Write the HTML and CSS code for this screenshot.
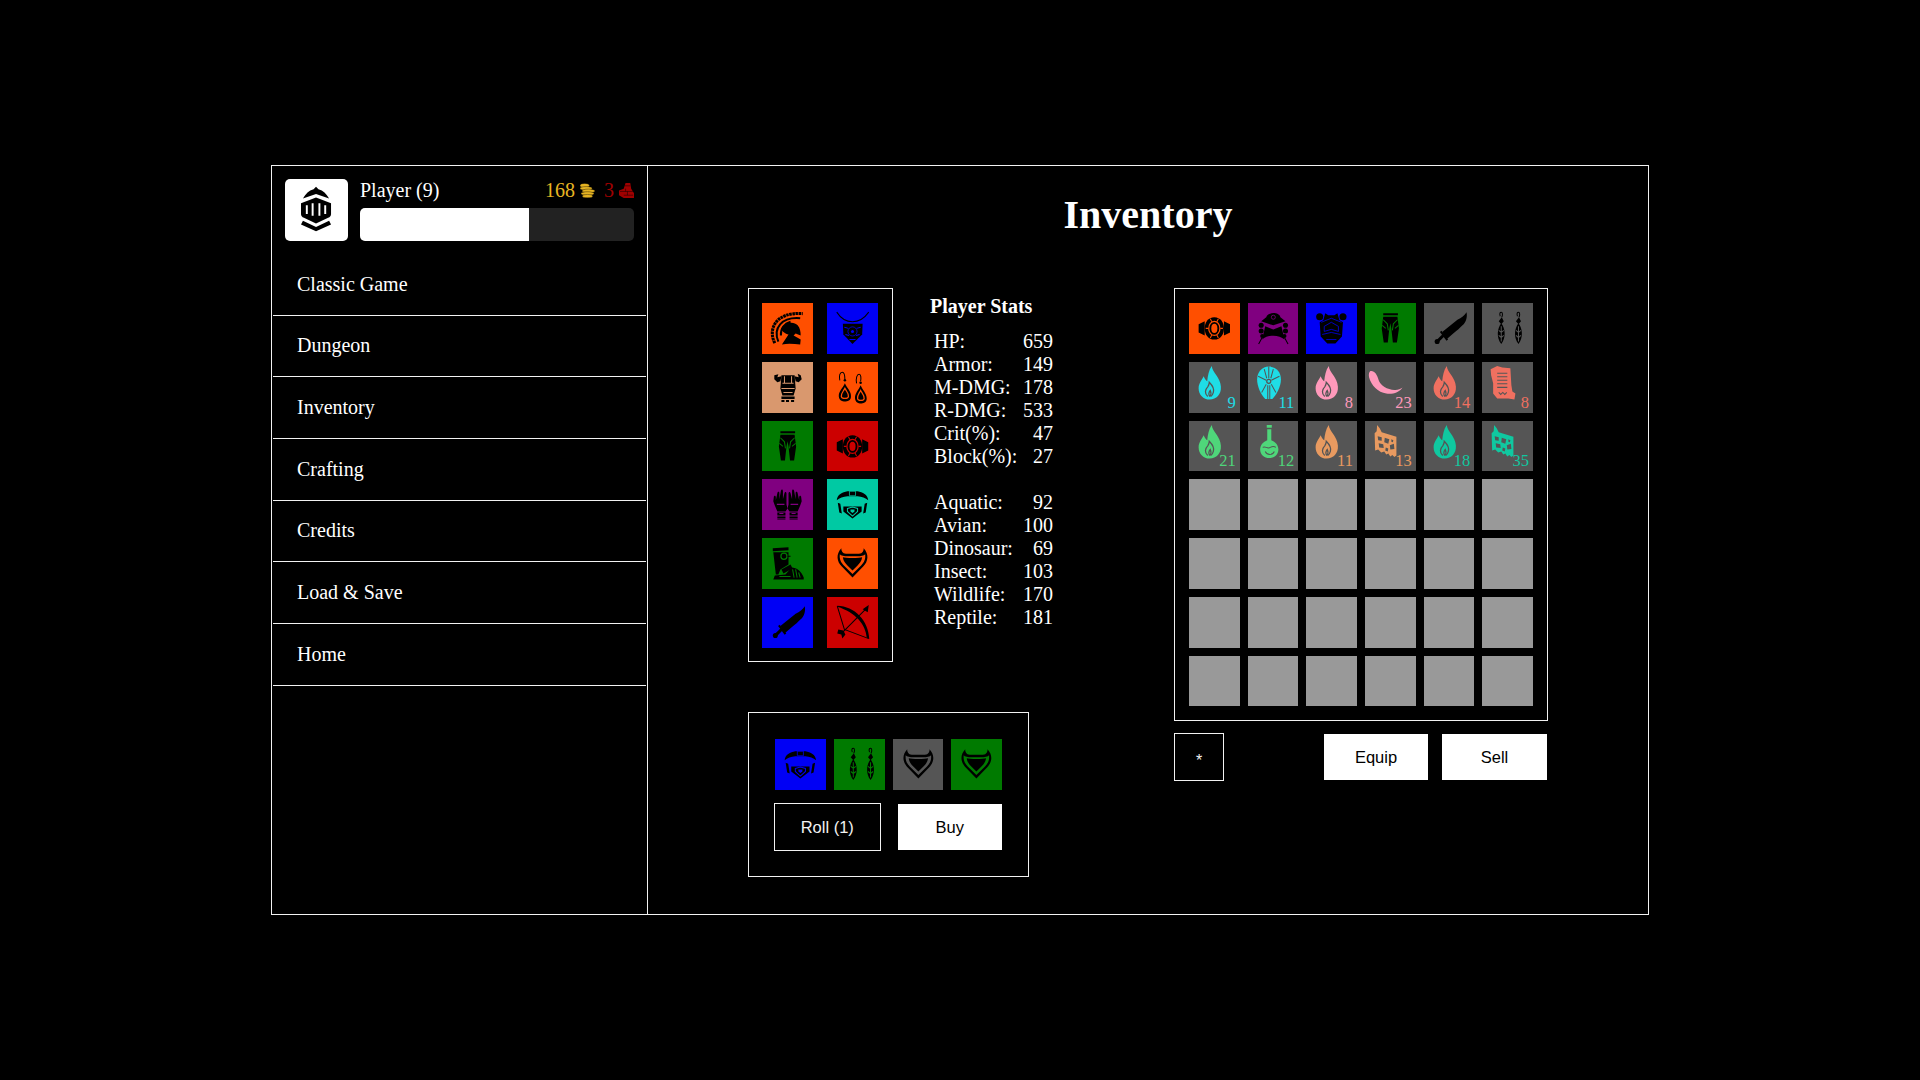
FILE: index.html
```html
<!DOCTYPE html>
<html lang="en">
<head>
<meta charset="utf-8">
<title>Inventory</title>
<link rel="stylesheet" href="styles.css">
</head>
<body>
<svg class="defs" xmlns="http://www.w3.org/2000/svg">
  <symbol id="helmet" viewBox="0 0 100 100">
    <path class="crest" d="M25 79C11 52 26 17 80 21"/>
    <path class="line crest-in" d="M32 76C21 50 38 27 75 30"/>
    <path d="M38 50C46 38 62 35 70 44C75 50 76 57 76 64L66 60L62 64L76 72L75 82C64 81 52 79 39 82L52 62C46 60 38 56 38 50Z"/>
    <path class="line crest-in" d="M37 64C36 50 44 40 56 37"/>
  </symbol>
  <symbol id="necklace" viewBox="0 0 100 100">
    <path class="line thin" d="M19 18C28 32 40 37 50 37C60 37 72 32 82 18"/>
    <path d="M31 41H70L69 62L50 81L32 62Z"/>
    <circle class="cutline thinner" cx="50" cy="56" r="9"/>
    <circle class="cutf" cx="50" cy="56" r="3"/>
    <path class="cut" d="M34 48L42 50M66 48L58 50M36 62L43 64M64 62L57 64M44 72L56 72"/>
  </symbol>
  <symbol id="chest-tan" viewBox="0 0 100 100">
    <path d="M24 26L32 24L30 30L38 28L36 38L30 40L24 34ZM76 26L70 23L72 30L64 28L66 38L72 40L78 34Z"/>
    <path d="M38 26H64L66 52L62 66H40L36 52Z"/>
    <path d="M38 68H64V73H38ZM38 75H44V79H38ZM47 75H53V79H47ZM57 75H63V79H57Z"/>
    <path class="cut" d="M40 42H62M38 52H64M44 28V42M58 28V42M42 60H60"/>
  </symbol>
  <symbol id="earrings-drop" viewBox="0 0 100 100">
    <path class="line thin" d="M25 36C23 28 25 20 30 20C34 20 35 28 35 34M58 42C56 32 59 24 63 24C67 24 67 32 66 38"/>
    <circle cx="35" cy="36" r="2.5"/><circle cx="66" cy="41" r="2.5"/>
    <path d="M35 42C31 52 22 58 23 68C24 76 30 78 35 78C40 78 47 76 47 68C48 58 39 52 35 42Z"/>
    <path d="M66 46C62 56 54 62 55 72C56 80 62 82 66 82C71 82 78 80 78 72C78 62 70 56 66 46Z"/>
    <path class="cutline" d="M35 52C32 58 27 62 28 68C29 73 41 73 42 68C43 62 38 58 35 52ZM66 56C63 62 59 66 60 72C61 77 72 77 73 72C74 66 69 62 66 56Z"/>
  </symbol>
  <symbol id="earrings-feather" viewBox="0 0 100 100">
    <path class="line thin" d="M36 26C34 20 36 18 38 18C41 18 41 24 39 28M70 26C68 20 70 18 72 18C75 18 75 24 73 28"/>
    <path d="M39 28L43 36L38 42L33 36ZM73 28L77 36L72 42L67 36Z"/>
    <path d="M38 40C46 50 48 68 38 81C28 68 30 50 38 40ZM72 40C80 50 82 68 72 81C62 68 64 50 72 40Z"/>
    <path class="cut" d="M38 46V76M33 54L38 58M43 54L38 58M33 64L38 68M43 64L38 68M72 46V76M67 54L72 58M77 54L72 58M67 64L72 68M77 64L72 68"/>
  </symbol>
  <symbol id="pants" viewBox="0 0 100 100">
    <path d="M36 20H65V24H36Z"/>
    <path d="M36 27H64L67 50L63 78H55L52 50L50 40L48 50L45 78H37L33 50Z"/>
    <path class="cut" d="M36 33L44 41L46 54M64 33L56 41L54 54M34 44L41 50M66 44L59 50"/>
  </symbol>
  <symbol id="ring" viewBox="0 0 100 100">
    <path d="M19 42L31 36V64L19 58ZM81 42L69 36V64L81 58Z"/>
    <path d="M50 28C62 28 69 38 69 50C69 62 62 72 50 72C38 72 31 62 31 50C31 38 38 28 50 28Z"/>
    <path class="cut" d="M42 31L45 37M58 31L55 37M33 50H38M67 50H62M42 69L45 63M58 69L55 63"/>
    <ellipse class="cutline" cx="50" cy="50" rx="11" ry="14"/>
    <ellipse class="cutf" cx="50" cy="50" rx="6" ry="9"/>
  </symbol>
  <symbol id="gloves" viewBox="0 0 100 100">
    <g>
      <path d="M23 36C23 32 27 32 27 36V42L30 28C31 24 34 25 34 28V40L37 23C38 20 41 20 41 24V40L44 28C45 25 48 25 48 29V50L50 58L46 64H30L25 52L22 44Z"/>
      <path d="M30 66H46V72H30ZM30 74H46V77H30ZM30 78H46V80H30Z"/>
      <path class="cut" d="M29 50H44M34 68H42"/>
    </g>
    <g transform="matrix(-1 0 0 1 100 0)">
      <path d="M23 36C23 32 27 32 27 36V42L30 28C31 24 34 25 34 28V40L37 23C38 20 41 20 41 24V40L44 28C45 25 48 25 48 29V50L50 58L46 64H30L25 52L22 44Z"/>
      <path d="M30 66H46V72H30ZM30 74H46V77H30ZM30 78H46V80H30Z"/>
      <path class="cut" d="M29 50H44M34 68H42"/>
    </g>
  </symbol>
  <symbol id="belt" viewBox="0 0 100 100">
    <path d="M19 42C20 30 30 26 40 24H60C70 26 80 30 81 42C76 37 68 35 60 34H40C32 35 24 37 19 42Z"/>
    <path class="cutline thinner" d="M44 24H56V33H44Z"/>
    <path d="M21 47L24 66L29 68L26 49ZM79 47L76 66L71 68L74 49Z"/>
    <path d="M32 54H68V64L50 78L32 64Z"/>
    <path class="cut" d="M40 58L50 55L60 58L60 64L50 73L40 64Z"/>
    <path class="cutf" d="M46 60H54V64L50 67L46 64Z"/>
  </symbol>
  <symbol id="boot" viewBox="0 0 100 100">
    <path d="M21 20L52 18V24L21 26Z"/>
    <path d="M22 28H52V52L36 62L32 72H27Z"/>
    <circle class="cutline" cx="43" cy="36" r="6"/>
    <path class="line thin" d="M50 36H56"/>
    <path d="M38 62L56 52L60 60L42 70Z"/>
    <path d="M58 58C68 58 78 66 82 78V82H22L25 74L46 72Z"/>
    <path class="cut" d="M60 62L63 78M66 62L69 78M72 68L75 78M34 76H56"/>
  </symbol>
  <symbol id="cape" viewBox="0 0 100 100">
    <path d="M28 20C17 32 19 46 29 56L50 78L71 56C81 46 83 32 72 20C72 28 68 31 60 31L40 31C32 31 28 28 28 20Z"/>
    <path class="cutf" d="M25 32C24 42 27 48 33 54L50 71L67 54C73 48 76 42 75 32C73 35 66 36 60 36L40 36C34 36 27 35 25 32Z"/>
    <path d="M31 38C36 40 64 40 69 38C68 46 64 50 60 54L50 64L40 54C36 50 32 46 31 38Z"/>
  </symbol>
  <symbol id="sword" viewBox="0 0 100 100">
    <path d="M36 57L66 33C74 29 80 24 84 18C86 28 83 38 76 44C70 50 66 54 60 58L44 72Z"/>
    <path class="line" d="M33 56L46 73"/>
    <path class="line wide" d="M28 74L38 64"/>
    <circle cx="26" cy="76" r="5"/>
  </symbol>
  <symbol id="bow" viewBox="0 0 100 100">
    <path d="M20 17C54 18 82 46 83 83L78 80C76 54 56 30 20 19Z"/>
    <path class="line thin" d="M20 18L34 64L82 82"/>
    <path class="line thin" d="M28 72L76 24"/>
    <path d="M70 24L82 16L80 30ZM22 64L32 66L36 74L30 82L28 74L20 72Z"/>
  </symbol>
  <symbol id="robe" viewBox="0 0 100 100">
    <path d="M36 28C38 17 62 17 64 28L74 36L50 44L26 36Z"/>
    <circle class="cutline thinner" cx="50" cy="28" r="4"/>
    <path d="M34 46L50 52L66 46L72 72C62 62 38 62 28 72Z"/>
    <path class="cut" d="M29 40L50 48L71 40"/>
    <circle cx="26" cy="44" r="5"/><circle cx="26" cy="55" r="5"/><circle cx="28" cy="65" r="4"/>
    <circle cx="74" cy="44" r="5"/><circle cx="74" cy="55" r="5"/><circle cx="72" cy="65" r="4"/>
    <path class="line thin" d="M28 68L21 81M72 68L79 81"/>
  </symbol>
  <symbol id="chest-blue" viewBox="0 0 100 100">
    <circle cx="27" cy="27" r="7"/><circle cx="73" cy="27" r="7"/>
    <path d="M38 20L44 24H56L62 20L66 34L73 38L71 66L58 80H42L29 66L27 38L34 34Z"/>
    <path class="cut thinner" d="M30 38L50 30L70 38M36 46L50 38L64 46V56L50 52L36 56ZM32 62L50 58L68 62M40 72H60"/>
  </symbol>
  <symbol id="flame" viewBox="0 0 100 100">
    <path d="M45 8C46 21 62 30 63 49C64 64 54 74 41 74C28 74 19 64 19 52C19 42 25 36 29 28C31 33 33 36 36 38C37 28 39 16 45 8Z"/>
    <path class="cutline" d="M37 68C30 62 32 54 37 49C40 45 40 42 40 40C46 46 50 54 48 60C47 64 45 67 43 68M41 68C38 64 39 60 42 56C44 60 44 64 41 68"/>
  </symbol>
  <symbol id="shield" viewBox="0 0 100 100">
    <path d="M41 9C56 9 65 20 65 34C65 50 56 64 48 73H34C26 64 18 50 18 34C18 20 28 9 41 9Z"/>
    <path class="cut" d="M41 9V32M32 14L37 32M50 14L45 32M20 28L36 36M62 28L46 36M36 44L27 60M46 44L55 60M39 46V73M43 46V73"/>
    <circle class="cutline" cx="41" cy="38" r="4"/>
  </symbol>
  <symbol id="feather" viewBox="0 0 100 100">
    <path d="M10 18C18 16 24 24 27 36C30 46 46 56 60 55C66 55 70 53 74 50C68 60 54 64 42 62C26 60 12 46 8 30C7 24 8 20 10 18Z"/>
  </symbol>
  <symbol id="scroll" viewBox="0 0 100 100">
    <path d="M17 14L30 8L40 11L56 12L58 46L60 58L66 62L64 74L52 72L30 72L22 62L22 42L18 26Z"/>
    <path class="cut" d="M30 22H50M30 29H50M30 36H50M30 43H50M30 50H50M33 60L37 64L41 60L45 64L49 60"/>
  </symbol>
  <symbol id="potion" viewBox="0 0 100 100">
    <path d="M37 8H47V13H37ZM38 16H46V38C54 41 60 48 60 56C60 66 52 73 42 73C32 73 24 66 24 56C24 48 30 41 38 38Z"/>
    <path class="cut" d="M29 52C34 48 38 56 44 52C48 50 52 50 55 52"/>
    <path class="cut" d="M34 60C38 68 48 68 52 60"/>
  </symbol>
  <symbol id="hide" viewBox="0 0 100 100">
    <path d="M24 8L29 14L33 22L62 31V68L58 71L54 67L50 70L46 64L42 66L38 60L32 62L26 56L20 58L19 24L23 20Z"/>
    <path class="cutf" d="M25 30L33 32L33 39L26 38ZM39 33L48 36L46 45L38 42ZM27 44L36 46L37 53L28 52ZM49 48L57 45L58 55L50 56ZM41 52L46 54L45 60L40 58ZM52 36L56 38L55 42L52 41Z"/>
  </symbol>
</svg>

<div class="frame">
  <aside class="sidebar">
    <header class="player">
      <div class="avatar">
        <svg class="knight" viewBox="0 0 64 64">
          <path d="M31.5 8L34 10.500C39 12 42 15 45 20L31.500 15.500L18 20C21 15 24 12 29 10.500Z"/>
          <path d="M31.500 19L47 25V36C47 38 46 39 44 40L31.500 46L19 40C17 39 16 38 16 36V25Z"/>
          <path class="knight-cut" d="M22 27V36M28 25V38M35 25V38M41 27V36"/>
          <path d="M18 43L31.500 49.500L45 43L47 47L31.500 54L16 47Z"/>
        </svg>
      </div>
      <div class="player-info">
        <div class="player-line">
          <span>Player (9)</span>
          <span class="currency">
            <span class="gold">168</span>
            <svg class="coin" viewBox="0 0 16 16"><ellipse cx="5" cy="2.700" rx="5" ry="2.200"/><ellipse cx="6.500" cy="5.800" rx="6.500" ry="2"/><ellipse cx="9" cy="8.500" rx="7" ry="2"/><ellipse cx="8" cy="11.300" rx="7" ry="2"/><ellipse cx="8" cy="14" rx="5.500" ry="1.800"/></svg>
            <span class="ruby">3</span>
            <svg class="brick" viewBox="0 0 16 16"><path d="M7 0H12L13 6L16 11V16H5L0 13V8L5 6Z"/><path class="brick-cut" d="M6 3H12M1 9H15M7 6V9M5 13H15M9 9V13"/></svg>
          </span>
        </div>
        <div class="xp"><div class="xp-fill"></div></div>
      </div>
    </header>
    <nav class="menu">
      <a class="menu-item">Classic Game</a>
      <a class="menu-item">Dungeon</a>
      <a class="menu-item">Inventory</a>
      <a class="menu-item">Crafting</a>
      <a class="menu-item">Credits</a>
      <a class="menu-item">Load &amp; Save</a>
      <a class="menu-item">Home</a>
    </nav>
  </aside>

  <main class="main">
    <h1 class="title">Inventory</h1>
    <div class="content">
      <section class="left">
        <div class="top-row">
          <div class="box equip">
            <div class="tile orange"><svg class="ico"><use href="#helmet"/></svg></div>
            <div class="tile blue"><svg class="ico"><use href="#necklace"/></svg></div>
            <div class="tile tan"><svg class="ico"><use href="#chest-tan"/></svg></div>
            <div class="tile orange"><svg class="ico"><use href="#earrings-drop"/></svg></div>
            <div class="tile green"><svg class="ico"><use href="#pants"/></svg></div>
            <div class="tile red"><svg class="ico"><use href="#ring"/></svg></div>
            <div class="tile purple"><svg class="ico"><use href="#gloves"/></svg></div>
            <div class="tile teal"><svg class="ico"><use href="#belt"/></svg></div>
            <div class="tile green"><svg class="ico"><use href="#boot"/></svg></div>
            <div class="tile orange"><svg class="ico"><use href="#cape"/></svg></div>
            <div class="tile blue"><svg class="ico"><use href="#sword"/></svg></div>
            <div class="tile red"><svg class="ico"><use href="#bow"/></svg></div>
          </div>
          <div class="stats">
            <h3 class="stats-title">Player Stats</h3>
            <div class="stat"><span>HP:</span><span>659</span></div>
            <div class="stat"><span>Armor:</span><span>149</span></div>
            <div class="stat"><span>M-DMG:</span><span>178</span></div>
            <div class="stat"><span>R-DMG:</span><span>533</span></div>
            <div class="stat"><span>Crit(%):</span><span>47</span></div>
            <div class="stat"><span>Block(%):</span><span>27</span></div>
            <div class="stat spacer"><span>Aquatic:</span><span>92</span></div>
            <div class="stat"><span>Avian:</span><span>100</span></div>
            <div class="stat"><span>Dinosaur:</span><span>69</span></div>
            <div class="stat"><span>Insect:</span><span>103</span></div>
            <div class="stat"><span>Wildlife:</span><span>170</span></div>
            <div class="stat"><span>Reptile:</span><span>181</span></div>
          </div>
        </div>
        <div class="box shop">
          <div class="shop-items">
            <div class="tile blue"><svg class="ico"><use href="#belt"/></svg></div>
            <div class="tile green"><svg class="ico"><use href="#earrings-feather"/></svg></div>
            <div class="tile grey"><svg class="ico"><use href="#cape"/></svg></div>
            <div class="tile green"><svg class="ico"><use href="#cape"/></svg></div>
          </div>
          <div class="shop-actions">
            <button class="btn ghost">Roll (1)</button>
            <button class="btn solid">Buy</button>
          </div>
        </div>
      </section>

      <section class="right">
        <div class="box bag">
          <div class="tile orange"><svg class="ico"><use href="#ring"/></svg></div>
          <div class="tile purple"><svg class="ico"><use href="#robe"/></svg></div>
          <div class="tile blue"><svg class="ico"><use href="#chest-blue"/></svg></div>
          <div class="tile green"><svg class="ico"><use href="#pants"/></svg></div>
          <div class="tile grey"><svg class="ico"><use href="#sword"/></svg></div>
          <div class="tile grey"><svg class="ico"><use href="#earrings-feather"/></svg></div>

          <div class="tile grey c-cyan"><svg class="ico"><use href="#flame"/></svg><span class="count">9</span></div>
          <div class="tile grey c-cyan"><svg class="ico"><use href="#shield"/></svg><span class="count">11</span></div>
          <div class="tile grey c-pink"><svg class="ico"><use href="#flame"/></svg><span class="count">8</span></div>
          <div class="tile grey c-pink"><svg class="ico"><use href="#feather"/></svg><span class="count">23</span></div>
          <div class="tile grey c-salmon"><svg class="ico"><use href="#flame"/></svg><span class="count">14</span></div>
          <div class="tile grey c-salmon"><svg class="ico"><use href="#scroll"/></svg><span class="count">8</span></div>

          <div class="tile grey c-lime"><svg class="ico"><use href="#flame"/></svg><span class="count">21</span></div>
          <div class="tile grey c-lime"><svg class="ico"><use href="#potion"/></svg><span class="count">12</span></div>
          <div class="tile grey c-sand"><svg class="ico"><use href="#flame"/></svg><span class="count">11</span></div>
          <div class="tile grey c-sand"><svg class="ico"><use href="#hide"/></svg><span class="count">13</span></div>
          <div class="tile grey c-teal"><svg class="ico"><use href="#flame"/></svg><span class="count">18</span></div>
          <div class="tile grey c-teal"><svg class="ico"><use href="#hide"/></svg><span class="count">35</span></div>

          <div class="tile empty"></div><div class="tile empty"></div><div class="tile empty"></div><div class="tile empty"></div><div class="tile empty"></div><div class="tile empty"></div>
          <div class="tile empty"></div><div class="tile empty"></div><div class="tile empty"></div><div class="tile empty"></div><div class="tile empty"></div><div class="tile empty"></div>
          <div class="tile empty"></div><div class="tile empty"></div><div class="tile empty"></div><div class="tile empty"></div><div class="tile empty"></div><div class="tile empty"></div>
          <div class="tile empty"></div><div class="tile empty"></div><div class="tile empty"></div><div class="tile empty"></div><div class="tile empty"></div><div class="tile empty"></div>
        </div>
        <div class="bag-actions">
          <button class="btn ghost star">*</button>
          <div class="bag-buttons">
            <button class="btn solid equip-btn">Equip</button>
            <button class="btn solid sell-btn">Sell</button>
          </div>
        </div>
      </section>
    </div>
  </main>
</div>
</body>
</html>
```

FILE: styles.css
```css
* { box-sizing: border-box; }

html, body { height: 100%; }

body {
  margin: 0;
  background: #000;
  color: #fff;
  font-family: "Liberation Serif", "Times New Roman", serif;
  font-size: 20px;
  display: flex;
  align-items: center;
  justify-content: center;
}

.defs { display: none; }

.frame {
  width: 1378px;
  height: 750px;
  border: 1px solid #f2f2f2;
  display: flex;
}

/* Sidebar */
.sidebar {
  width: 376px;
  flex: none;
  border-right: 1px solid #f2f2f2;
}

.player {
  display: flex;
  gap: 12px;
  height: 88px;
  padding: 13px 13px 0 13px;
}

.avatar {
  width: 63px;
  height: 62px;
  background: #fff;
  border-radius: 5px;
  flex: none;
}

.knight { display: block; width: 100%; height: 100%; fill: #000; }
.knight-cut { fill: none; stroke: #fff; stroke-width: 2; }

.player-info { flex: 1; }

.player-line {
  display: flex;
  justify-content: space-between;
  align-items: center;
  height: 23px;
  margin-bottom: 6px;
  line-height: 23px;
}

.currency { display: flex; align-items: center; }
.gold { color: #e6b422; }
.ruby { color: #a00000; margin-left: 9px; }
.coin { width: 15px; height: 15px; margin-left: 5px; fill: #e6b422; }
.coin ellipse { stroke: #000; stroke-width: 0.4; }
.brick { width: 15px; height: 15px; margin-left: 5px; fill: #a00000; }
.brick-cut { fill: none; stroke: #000; stroke-width: 0.5; }

.xp {
  height: 33px;
  background: #222;
  border-radius: 5px;
  overflow: hidden;
}

.xp-fill { width: 169px; height: 100%; background: #fff; }

.menu-item {
  display: flex;
  align-items: center;
  height: 61.67px;
  margin: 0 1px;
  padding-left: 24px;
  border-bottom: 1px solid #f2f2f2;
}

/* Main */
.main { flex: 1; min-width: 0; }

.title {
  margin: 27px 0 51px;
  height: 44px;
  line-height: 44px;
  font-size: 40px;
  font-weight: bold;
  text-align: center;
}

.content {
  display: flex;
  justify-content: space-between;
  padding: 0 100px;
}

.box { border: 1px solid #f2f2f2; }

.top-row { display: flex; gap: 37px; align-items: flex-start; }

.equip {
  display: grid;
  grid-template-columns: 51px 51px;
  align-content: start;
  column-gap: 14px;
  row-gap: 8px;
  height: 374px;
  padding: 14px 14px 0 13px;
  width: 145px;
}

.tile {
  position: relative;
  height: 50.75px;
  background: var(--bg);
  color: #000;
  --bg: #555;
}

.orange { --bg: #ff4f00; }
.blue { --bg: #0000f5; }
.tan { --bg: #d9986e; }
.green { --bg: #007a00; }
.red { --bg: #cc0000; }
.purple { --bg: #800080; }
.teal { --bg: #00c9a3; }
.grey { --bg: #555; }
.empty { --bg: #999; }

.c-cyan { color: #1fdde6; }
.c-pink { color: #ff99bb; }
.c-salmon { color: #f07060; }
.c-lime { color: #4fd67a; }
.c-sand { color: #e89a60; }
.c-teal { color: #10c8a0; }

.ico { display: block; width: 100%; height: 100%; fill: currentColor; }

.cut { fill: none; stroke: var(--bg); stroke-width: 2; }
.cutline { fill: none; stroke: var(--bg); stroke-width: 2.5; }
.cutf { fill: var(--bg); }
.line { fill: none; stroke: currentColor; stroke-width: 4; }
.thin { stroke-width: 2; }
.wide { stroke-width: 6; }
.thinner { stroke-width: 1.5; }
.crest { fill: none; stroke: currentColor; stroke-width: 6; stroke-dasharray: 5 1.2; }
.crest-in { stroke-width: 4; }

.count {
  position: absolute;
  right: 4px;
  bottom: 1px;
  font-size: 16.5px;
  line-height: 18px;
}

.stats { width: 123px; padding-top: 6px; }

.stats-title {
  margin: 0 0 11px;
  font-size: 20px;
  line-height: 25px;
  font-weight: bold;
  white-space: nowrap;
}

.stat {
  display: flex;
  justify-content: space-between;
  margin-left: 4px;
  height: 23px;
  line-height: 23px;
}

.spacer { margin-top: 23px; }

.shop {
  width: 281px;
  height: 165px;
  margin-top: 50px;
  padding: 26px 25px 0;
}

.shop-items {
  display: grid;
  grid-template-columns: repeat(4, 50.75px);
  column-gap: 8px;
  margin-left: 1px;
  margin-bottom: 13.5px;
}

.shop-actions { display: flex; gap: 16px; }

.btn {
  height: 48px;
  width: 107px;
  font-family: "Liberation Sans", Arial, sans-serif;
  font-size: 16.5px;
  padding: 0;
  border-radius: 0;
}

.ghost { background: #000; color: #f2f2f2; border: 1px solid #f2f2f2; }
.solid { background: #fff; color: #000; border: 1px solid #000; }

.right { width: 374px; }

.bag {
  display: grid;
  grid-template-columns: repeat(6, 50.67px);
  column-gap: 8px;
  row-gap: 8px;
  padding: 14px;
}

.bag-actions {
  display: flex;
  justify-content: space-between;
  margin-top: 12px;
}

.star { width: 50px; font-size: 16px; padding-top: 7px; }
.bag-buttons { display: flex; gap: 12px; }
.equip-btn { width: 106px; }
```
